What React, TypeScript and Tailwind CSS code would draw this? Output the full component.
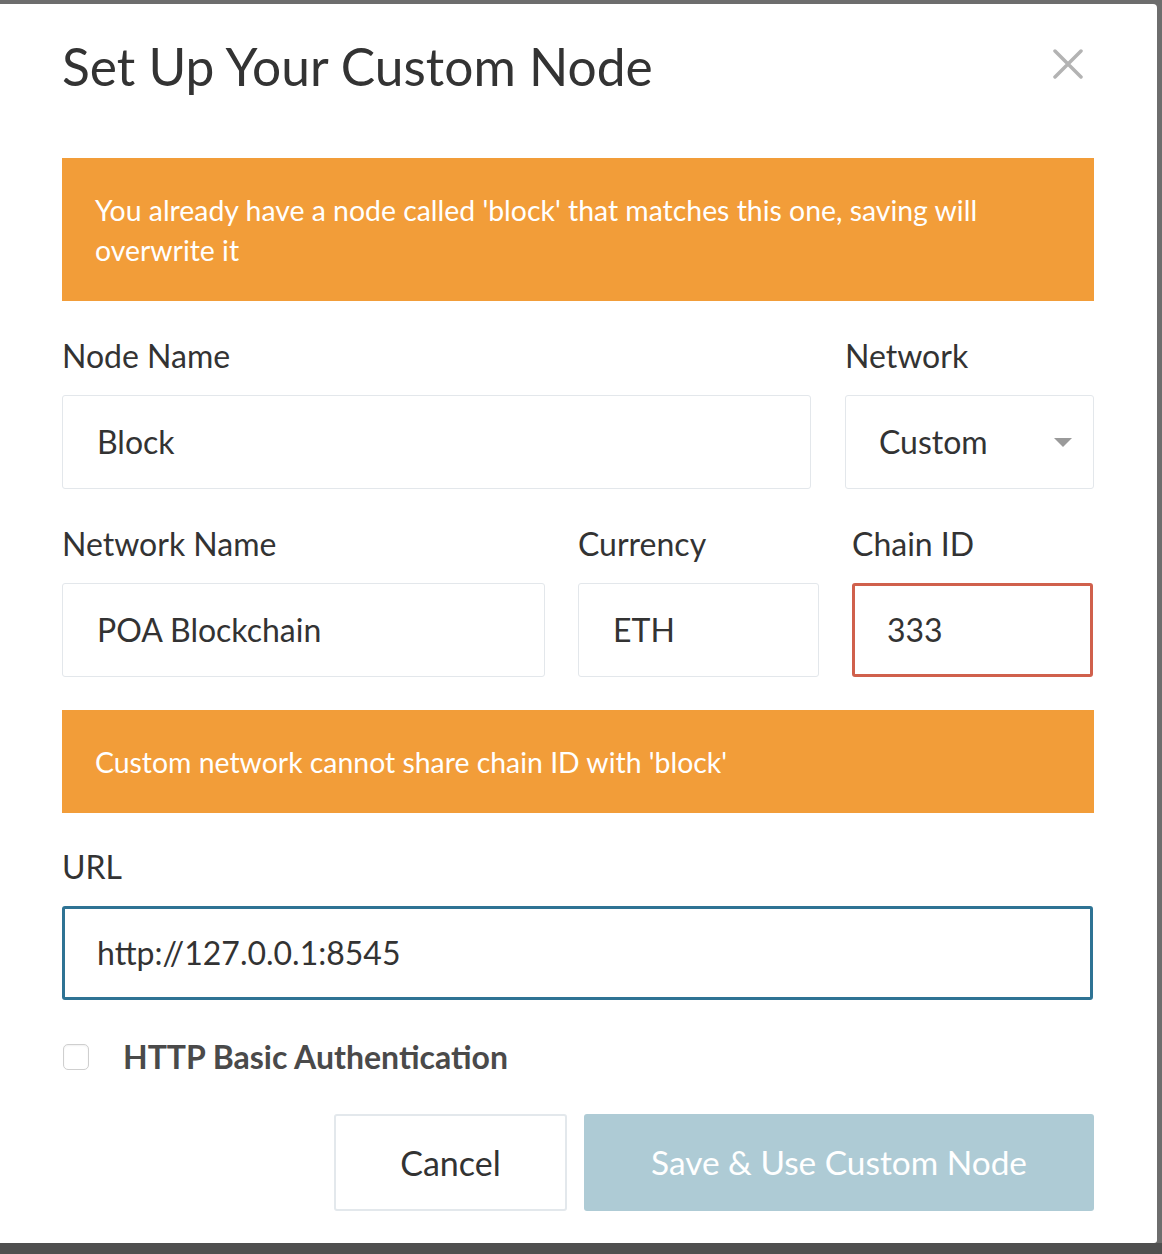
import React from "react";

export default function App() {
  const font = { fontFamily: "Lato, 'Open Sans', sans-serif" };
  return (
    <div className="w-[1162px] h-[1254px] bg-[#6d6d6d] flex flex-col overflow-hidden" style={font}>
      <div className="pt-[4px] flex-1 flex">
        <div className="w-[1157px] h-[1239px] bg-white rounded-tr-[4px] rounded-br-[3px] pl-[62px] pr-[63px] pt-[32px] flex flex-col text-[#333]">
          {/* Header */}
          <div className="flex items-center justify-between h-[60px]">
            <h1 className="text-[51.5px] leading-[60px] font-normal text-[#333]">Set Up Your Custom Node</h1>
            <button className="w-[30px] h-[30px] mr-[11px] -mt-[4px] flex items-center justify-center">
              <svg width="30" height="30" viewBox="0 0 30 30">
                <path d="M2 2 L28 28 M28 2 L2 28" stroke="#b3b3b3" strokeWidth="3.5" strokeLinecap="round" />
              </svg>
            </button>
          </div>

          {/* Alert 1 */}
          <div className="mt-[62px] bg-[#f29d39] text-white text-[28.4px] leading-[40px] px-[33px] pt-[32px] pb-[31px]">
            You already have a node called 'block' that matches this one, saving will overwrite it
          </div>

          {/* Row 1 */}
          <div className="mt-[36px] flex gap-[34px]">
            <div className="flex flex-col w-[749px]">
              <label className="text-[32px] leading-[38px] text-[#333]">Node Name</label>
              <div className="mt-[20px] h-[94px] border border-[#e3e7eb] rounded-[3px] pl-[34px] flex items-center text-[32px] text-[#333]">
                Block
              </div>
            </div>
            <div className="flex flex-col w-[249px]">
              <label className="text-[32px] leading-[38px] text-[#333]">Network</label>
              <div className="mt-[20px] h-[94px] border border-[#e3e7eb] rounded-[3px] pl-[33px] pr-[21px] flex items-center justify-between text-[32px] text-[#333]">
                <span>Custom</span>
                <svg width="18" height="9" viewBox="0 0 18 9">
                  <path d="M0 0 L18 0 L9 9 Z" fill="#9a9a9a" />
                </svg>
              </div>
            </div>
          </div>

          {/* Row 2 */}
          <div className="mt-[36px] flex">
            <div className="flex flex-col w-[483px]">
              <label className="text-[32px] leading-[38px] text-[#333]">Network Name</label>
              <div className="mt-[20px] h-[94px] border border-[#e3e7eb] rounded-[3px] pl-[34px] flex items-center text-[32px] text-[#333]">
                POA Blockchain
              </div>
            </div>
            <div className="flex flex-col w-[241px] ml-[33px]">
              <label className="text-[32px] leading-[38px] text-[#333]">Currency</label>
              <div className="mt-[20px] h-[94px] border border-[#e3e7eb] rounded-[3px] pl-[34px] flex items-center text-[32px] text-[#333]">
                ETH
              </div>
            </div>
            <div className="flex flex-col w-[241px] ml-[33px]">
              <label className="text-[32px] leading-[38px] text-[#333]">Chain ID</label>
              <div className="mt-[20px] h-[94px] border-[3px] border-[#d0604c] rounded-[3px] pl-[32px] flex items-center text-[32px] text-[#333]">
                333
              </div>
            </div>
          </div>

          {/* Alert 2 */}
          <div className="mt-[33px] bg-[#f29d39] text-white text-[28.4px] leading-[40px] px-[33px] pt-[32px] pb-[31px]">
            Custom network cannot share chain ID with 'block'
          </div>

          {/* URL */}
          <div className="mt-[35px] flex flex-col">
            <label className="text-[32px] leading-[38px] text-[#333]">URL</label>
            <div className="mt-[20px] h-[94px] w-[1031px] border-[3px] border-[#2e7394] rounded-[3px] pl-[32px] flex items-center text-[32px] text-[#333]">
              http://127.0.0.1:8545
            </div>
          </div>

          {/* Checkbox */}
          <div className="mt-[44px] flex items-center h-[26px]">
            <div className="w-[26px] h-[26px] ml-[1px] border border-[#cfcfcf] rounded-[5px] bg-white shadow-[inset_0_1px_2px_rgba(0,0,0,0.06)]" />
            <span className="ml-[34px] text-[32px] font-bold text-[#4a4a4a]">HTTP Basic Authentication</span>
          </div>

          {/* Buttons */}
          <div className="mt-[44px] flex justify-end gap-[17px]">
            <button className="w-[233px] h-[97px] border-2 border-[#e3e8ec] rounded-[3px] bg-white text-[34px] text-[#333]">
              Cancel
            </button>
            <button className="w-[510px] h-[97px] rounded-[3px] bg-[#aecbd5] text-[33.4px] text-white">
              Save &amp; Use Custom Node
            </button>
          </div>
        </div>
      </div>
      <div className="h-[11px] bg-[#4f4f4f]" />
    </div>
  );
}
